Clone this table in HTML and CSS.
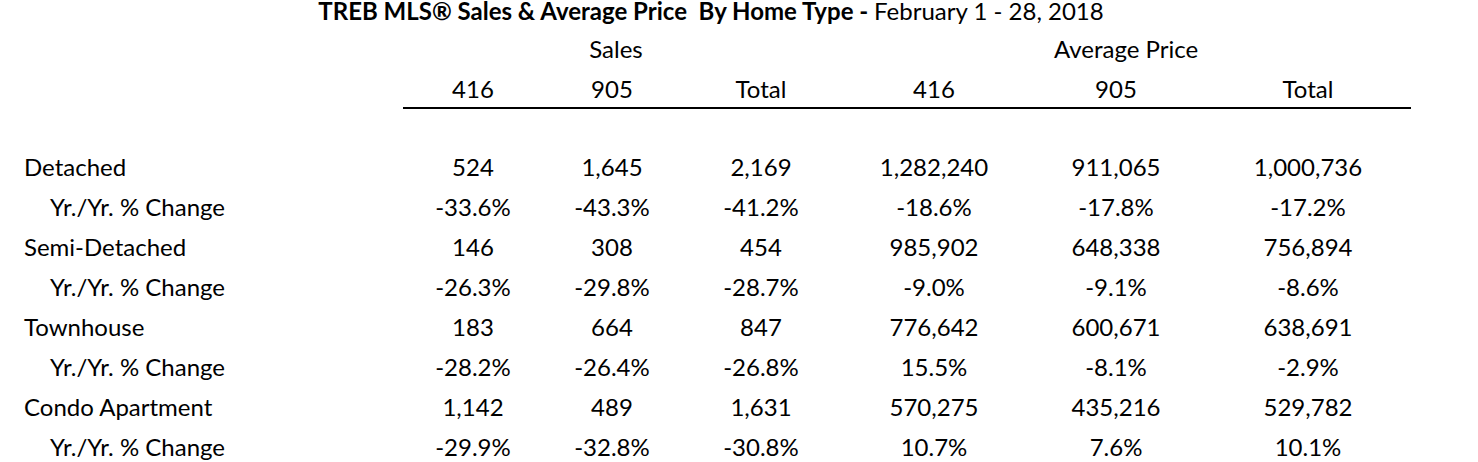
FILE: index.html
```html
<!DOCTYPE html>
<html>
<head>
<meta charset="utf-8">
<link rel="stylesheet" href="styles.css">
</head>
<body>
<div class="page">
  <div class="title"><b>TREB MLS® Sales &amp; Average Price&nbsp; By Home Type - </b>February 1 - 28, 2018</div>
  <div class="grid">
    <div class="cell"></div>
    <div class="cell group sales">Sales</div>
    <div class="cell group price">Average Price</div>

    <div class="cell"></div>
    <div class="cell head">416</div>
    <div class="cell head">905</div>
    <div class="cell head">Total</div>
    <div class="cell head">416</div>
    <div class="cell head">905</div>
    <div class="cell head">Total</div>

    <div class="spacer"></div>

    <div class="cell label">Detached</div>
    <div class="cell">524</div><div class="cell">1,645</div><div class="cell">2,169</div>
    <div class="cell">1,282,240</div><div class="cell">911,065</div><div class="cell">1,000,736</div>

    <div class="cell label sub">Yr./Yr. % Change</div>
    <div class="cell">-33.6%</div><div class="cell">-43.3%</div><div class="cell">-41.2%</div>
    <div class="cell">-18.6%</div><div class="cell">-17.8%</div><div class="cell">-17.2%</div>

    <div class="cell label">Semi-Detached</div>
    <div class="cell">146</div><div class="cell">308</div><div class="cell">454</div>
    <div class="cell">985,902</div><div class="cell">648,338</div><div class="cell">756,894</div>

    <div class="cell label sub">Yr./Yr. % Change</div>
    <div class="cell">-26.3%</div><div class="cell">-29.8%</div><div class="cell">-28.7%</div>
    <div class="cell">-9.0%</div><div class="cell">-9.1%</div><div class="cell">-8.6%</div>

    <div class="cell label">Townhouse</div>
    <div class="cell">183</div><div class="cell">664</div><div class="cell">847</div>
    <div class="cell">776,642</div><div class="cell">600,671</div><div class="cell">638,691</div>

    <div class="cell label sub">Yr./Yr. % Change</div>
    <div class="cell">-28.2%</div><div class="cell">-26.4%</div><div class="cell">-26.8%</div>
    <div class="cell">15.5%</div><div class="cell">-8.1%</div><div class="cell">-2.9%</div>

    <div class="cell label">Condo Apartment</div>
    <div class="cell">1,142</div><div class="cell">489</div><div class="cell">1,631</div>
    <div class="cell">570,275</div><div class="cell">435,216</div><div class="cell">529,782</div>

    <div class="cell label sub">Yr./Yr. % Change</div>
    <div class="cell">-29.9%</div><div class="cell">-32.8%</div><div class="cell">-30.8%</div>
    <div class="cell">10.7%</div><div class="cell">7.6%</div><div class="cell">10.1%</div>
  </div>
</div>
</body>
</html>
```
FILE: styles.css
```css
html, body {
  margin: 0;
  padding: 0;
  background: #fff;
}
.page {
  width: 1478px;
  height: 462px;
  overflow: hidden;
  font-family: Lato, "Open Sans", "Liberation Sans", sans-serif;
  font-size: 24px;
  color: #000;
}
.title {
  height: 29px;
  line-height: 22px;
  text-align: center;
  width: 1422px;
  font-size: 24px;
}
.title b {
  font-weight: 700;
}
.grid {
  display: grid;
  grid-template-columns: 403px 140px 138px 160px 186px 178px 206px;
}
.cell {
  height: 40px;
  line-height: 40px;
  text-align: center;
  white-space: nowrap;
}
.group.sales {
  grid-column: span 3;
  padding-right: 12px;
}
.group.price {
  grid-column: span 3;
}
.head {
  height: 38px;
  line-height: 40px;
  border-bottom: 2px solid #000;
}
.spacer {
  grid-column: 1 / -1;
  height: 38px;
}
.label {
  text-align: left;
  padding-left: 24px;
}
.label.sub {
  padding-left: 50px;
}
```
